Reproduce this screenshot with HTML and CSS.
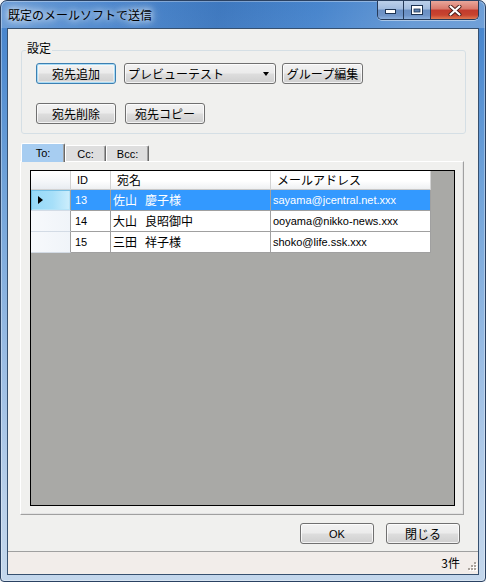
FILE: index.html
```html
<!DOCTYPE html>
<html lang="ja">
<head>
<meta charset="utf-8">
<title>既定のメールソフトで送信</title>
<link rel="stylesheet" href="styles.css">
</head>
<body>
<div class="window">
  <div class="titlebar">
    <div class="title">既定のメールソフトで送信</div>
    <div class="caption">
      <div class="cbtn min">
        <svg width="11" height="5" viewBox="0 0 11 5"><rect x="0.5" y="0.5" width="10" height="4" fill="#fff" stroke="#1d3352"/></svg>
      </div>
      <div class="cbtn max">
        <svg width="12" height="10" viewBox="0 0 12 10"><rect x="0.5" y="0.5" width="11" height="9" fill="#fff" stroke="#1d3352"/><rect x="3" y="4" width="6" height="3" fill="#5d7fae" stroke="#1d3352" stroke-width="0.8"/></svg>
      </div>
      <div class="cbtn close">
        <svg width="14" height="11" viewBox="0 0 14 11"><path d="M2.5 1.5 L11.5 9.5 M11.5 1.5 L2.5 9.5" stroke="#4a1d18" stroke-width="4" stroke-linecap="round"/><path d="M2.5 1.5 L11.5 9.5 M11.5 1.5 L2.5 9.5" stroke="#fff" stroke-width="2.2" stroke-linecap="round"/></svg>
      </div>
    </div>
  </div>
  <div class="client">
    <fieldset class="group">
      <legend>設定</legend>
      <div class="group-body">
        <div class="row">
          <div class="btn default w80">宛先追加</div>
          <div class="combo"><span class="combo-text">プレビューテスト</span><span class="arrow"></span></div>
          <div class="btn w81 ml6">グループ編集</div>
        </div>
        <div class="row">
          <div class="btn w80">宛先削除</div>
          <div class="btn w80 ml9">宛先コピー</div>
        </div>
      </div>
    </fieldset>
    <div class="tabs">
      <div class="tab sel lat">To:</div>
      <div class="tab lat tab-cc">Cc:</div>
      <div class="tab lat tab-bcc">Bcc:</div>
    </div>
    <div class="tabpanel">
      <div class="grid">
        <div class="table">
          <div class="rh corner"></div>
          <div class="ch lat">ID</div>
          <div class="ch">宛名</div>
          <div class="ch">メールアドレス</div>

          <div class="rh current"><span class="tri"></span></div>
          <div class="cell sel lat id">13</div>
          <div class="cell sel name">佐山<span class="gap"></span>慶子様</div>
          <div class="cell sel lat">sayama@jcentral.net.xxx</div>

          <div class="rh"></div>
          <div class="cell lat id">14</div>
          <div class="cell name">大山<span class="gap"></span>良昭御中</div>
          <div class="cell lat">ooyama@nikko-news.xxx</div>

          <div class="rh"></div>
          <div class="cell lat id">15</div>
          <div class="cell name">三田<span class="gap"></span>祥子様</div>
          <div class="cell lat">shoko@life.ssk.xxx</div>
        </div>
      </div>
    </div>
    <div class="actions">
      <div class="btn w74 lat">OK</div>
      <div class="btn w74">閉じる</div>
    </div>
    <div class="status">
      <span class="count">3件</span>
      <svg class="grip" width="12" height="12" viewBox="0 0 12 12">
        <g fill="#fff"><rect x="9" y="2" width="2" height="2"/><rect x="6" y="5" width="2" height="2"/><rect x="9" y="5" width="2" height="2"/><rect x="3" y="8" width="2" height="2"/><rect x="6" y="8" width="2" height="2"/><rect x="9" y="8" width="2" height="2"/></g>
        <g fill="#a9a29c"><rect x="8" y="1" width="2" height="2"/><rect x="5" y="4" width="2" height="2"/><rect x="8" y="4" width="2" height="2"/><rect x="2" y="7" width="2" height="2"/><rect x="5" y="7" width="2" height="2"/><rect x="8" y="7" width="2" height="2"/></g>
      </svg>
    </div>
  </div>
</div>
</body>
</html>
```

FILE: styles.css
```css
* { box-sizing: border-box; }
html, body { margin: 0; padding: 0; }
body {
  width: 486px;
  height: 582px;
  overflow: hidden;
  background: #f4f6f9;
  font-family: "Noto Sans CJK JP", sans-serif;
  font-size: 12px;
  line-height: 14px;
  color: #000;
}
.lat { font-family: "Liberation Sans", "Noto Sans CJK JP", sans-serif; font-size: 11px; }

.window {
  width: 486px;
  height: 582px;
  border: 1px solid #2a4162;
  border-radius: 7px 7px 4px 4px;
  background: linear-gradient(180deg, #4482cb 0px, #4f8bd0 60px, #6fa2d9 180px, #9bbde4 360px, #b9d0ea 500px, #c4d7ec 582px);
  box-shadow: inset 0 0 0 1px rgba(255,255,255,0.35);
  display: flex;
  flex-direction: column;
  overflow: hidden;
}

.titlebar {
  height: 27px;
  flex: none;
  display: flex;
  align-items: flex-start;
  background: linear-gradient(100deg, rgba(255,255,255,0.2) 0%, rgba(255,255,255,0.05) 22%, rgba(10,30,80,0.1) 45%, rgba(255,255,255,0.02) 65%, rgba(255,255,255,0.18) 85%, rgba(255,255,255,0.22) 100%);
}
.title {
  margin: 7px 0 0 7px;
  font-size: 12px;
  line-height: 14px;
  color: #000;
  text-shadow: 0 0 6px #fff, 0 0 10px rgba(255,255,255,0.8), 0 0 14px rgba(255,255,255,0.5);
}

.caption {
  margin-left: auto;
  margin-right: 6px;
  display: flex;
  height: 19px;
  border: 1px solid #263a58;
  border-top: none;
  border-radius: 0 0 5px 5px;
  overflow: hidden;
  box-shadow: 0 1px 0 rgba(255,255,255,0.45);
}
.cbtn {
  height: 18px;
  display: flex;
  justify-content: center;
}
.cbtn.min, .cbtn.max {
  width: 26px;
  border-right: 1px solid #263a58;
  background: linear-gradient(180deg, #bcd0ea 0%, #a2bcdf 45%, #6a8fc2 50%, #6f94c8 80%, #8cb0dc 100%);
}
.cbtn.max { width: 27px; }
.cbtn.min { align-items: flex-end; padding-bottom: 5px; }
.cbtn.max { align-items: center; }
.cbtn.close {
  width: 47px;
  align-items: center;
  background: linear-gradient(180deg, #e9a79b 0%, #d9786a 45%, #c23b2d 50%, #c8442f 78%, #e07a52 100%);
}

.client {
  flex: none;
  width: 472px;
  height: 547px;
  margin: 0 6px 0 6px;
  border: 1px solid #36506f;
  background: #f0f0ee;
  display: flex;
  flex-direction: column;
}

/* group box */
.group {
  margin: 12px 0 0 13px;
  width: 445px;
  padding: 0;
  border: 1px solid #d5dfe5;
  border-radius: 3px;
  min-inline-size: 0;
}
.group legend {
  margin-left: 4px;
  padding: 0 1px 5px 1px;
  line-height: 14px;
  font-size: 12px;
}
.group-body {
  padding: 3px 0 9px 14px;
  display: flex;
  flex-direction: column;
  gap: 19px;
}
.row { display: flex; }

.btn {
  height: 21px;
  border: 1px solid #707070;
  border-radius: 3px;
  background: linear-gradient(180deg, #f2f2f2 0%, #ebebeb 48%, #dddddd 52%, #cfcfcf 100%);
  box-shadow: inset 0 0 0 1px rgba(255,255,255,0.75);
  display: flex;
  align-items: center;
  justify-content: center;
  line-height: 14px;
}
.btn.default {
  border-color: #3c7fb1;
  box-shadow: inset 0 0 0 1px #a9dcf6, inset 0 0 0 2px rgba(255,255,255,0.4);
}
.w80 { width: 80px; }
.w81 { width: 81px; }
.w74 { width: 74px; }
.ml6 { margin-left: 6px; }
.ml9 { margin-left: 9px; }

.combo {
  width: 152px;
  height: 21px;
  margin-left: 8px;
  border: 1px solid #707070;
  border-radius: 3px;
  background: linear-gradient(180deg, #f2f2f2 0%, #ebebeb 48%, #dddddd 52%, #cfcfcf 100%);
  box-shadow: inset 0 0 0 1px rgba(255,255,255,0.75);
  display: flex;
  align-items: center;
  padding: 0 6px 0 3px;
}
.combo-text { flex: 1; }
.arrow {
  width: 0;
  height: 0;
  border-left: 3.5px solid transparent;
  border-right: 3.5px solid transparent;
  border-top: 4px solid #000;
  margin-top: 1px;
}

/* tabs */
.tabs {
  margin: 9px 0 0 13px;
  height: 18px;
  display: flex;
  align-items: flex-end;
  position: relative;
  z-index: 1;
}
.tab {
  height: 16px;
  border: 1px solid;
  border-color: #ffffff #696969 transparent #ffffff;
  border-bottom: none;
  border-radius: 2px 2px 0 0;
  background: #dedede;
  box-shadow: inset -1px 0 0 #a0a0a0;
  display: flex;
  align-items: center;
  justify-content: center;
  line-height: 12px;
}
.tab.sel {
  width: 44px;
  height: 19px;
  margin-bottom: -1px;
  background: #a7cdf1;
  padding-bottom: 1px;
}
.tab-cc { width: 41px; }
.tab-bcc { width: 43px; }

.tabpanel {
  margin-left: 12px;
  width: 444px;
  height: 354px;
  border: 1px solid;
  border-color: #ffffff #a0a0a0 #a0a0a0 #ffffff;
  box-shadow: inset -1px -1px 0 #e3e3e3;
  padding: 8px 0 0 9px;
}
.grid {
  width: 425px;
  height: 336px;
  border: 1px solid #000;
  background: #a9a9a6;
}
.table {
  display: grid;
  grid-template-columns: 40px 40px 160px 160px;
  grid-template-rows: 19px 21px 21px 21px;
  width: 400px;
}
.rh {
  background: linear-gradient(90deg, #f7f9fc 0%, #f0f4f9 100%);
  border-right: 1px solid #a0a0a0;
  border-bottom: 1px solid #d3dbe5;
  display: flex;
  align-items: center;
}
.rh.corner {
  background: linear-gradient(180deg, #ffffff 0%, #f4f6f9 60%, #e8ecf1 100%);
  border-right: 1px solid #d2d2d2;
  border-bottom: 1px solid #d2d2d2;
}
.rh.current {
  background: linear-gradient(90deg, #94d8f8 0%, #a6dff9 55%, #cdeefc 100%);
  box-shadow: inset 1px 1px 0 #72bfe6, inset -1px -1px 0 #b5e3f8;
  padding-left: 7px;
}
.tri {
  width: 0;
  height: 0;
  border-left: 5px solid #000;
  border-top: 4.5px solid transparent;
  border-bottom: 4.5px solid transparent;
}
.ch {
  background: linear-gradient(180deg, #ffffff 0%, #ffffff 55%, #eef0f2 100%);
  border-right: 1px solid #d2d2d2;
  border-bottom: 1px solid #c8c8c8;
  padding-left: 6px;
  display: flex;
  align-items: center;
}
.cell {
  background: #fff;
  border-right: 1px solid #a0a0a0;
  border-bottom: 1px solid #a0a0a0;
  display: flex;
  align-items: center;
  padding-left: 2px;
  white-space: nowrap;
}
.cell.id { padding-left: 4px; }
.cell.sel { background: #3399ff; color: #fff; }
.gap { display: inline-block; width: 8px; }

.actions {
  margin-top: 8px;
  display: flex;
  justify-content: flex-end;
  gap: 12px;
  padding-right: 18px;
}

.status {
  margin-top: auto;
  height: 23px;
  border-top: 1px solid #a0a0a0;
  background: #f2edea;
  display: flex;
  align-items: center;
  justify-content: flex-end;
}
.count { padding-right: 6px; line-height: 14px; }
.grip { align-self: flex-end; margin-bottom: 1px; }
```
